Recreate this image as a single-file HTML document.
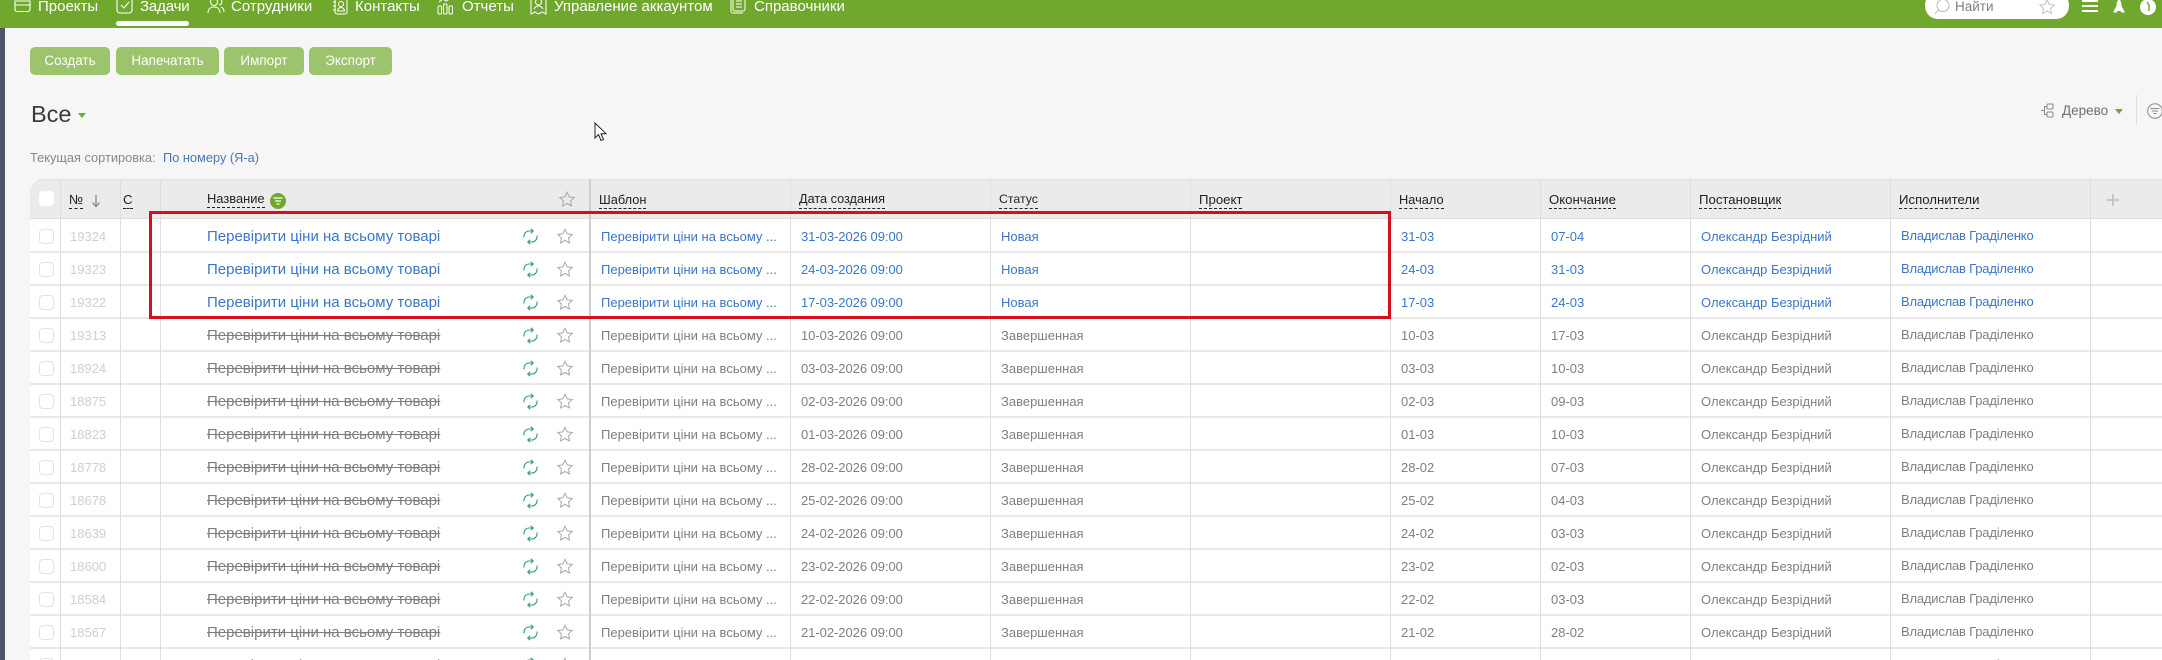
<!DOCTYPE html>
<html lang="ru"><head><meta charset="utf-8"><title>Задачи</title>
<style>
html,body{margin:0;padding:0;width:2162px;height:660px;overflow:hidden}
#page{width:2162px;height:660px;position:relative;overflow:hidden;background:#f6f6f6;font-family:"Liberation Sans","DejaVu Sans",sans-serif;font-size:14px;color:#333}
.abs{position:absolute;white-space:nowrap}
#top{position:absolute;left:0;top:0;width:2162px;height:28px;background:#70a82e}
#strip{position:absolute;left:0;top:28px;width:5px;height:632px;background:#50546b}
.nav{position:absolute;top:-2px;line-height:18px;font-size:15px;color:#fff;white-space:nowrap}
.btn{position:absolute;top:47px;height:28px;line-height:28px;background:#9bc46c;color:#fff;border-radius:5px;text-align:center;font-size:13.5px}
svg{position:absolute;overflow:visible}
#thead{position:absolute;left:30px;top:179px;width:2132px;height:40px;background:#ebebeb;border-top-left-radius:14px;box-shadow:inset 0 1px 0 #e3e3e3,inset 0 -1px 0 #dedede}
#tbody{position:absolute;left:30px;top:219px;width:2132px;height:441px;background:#fff}
.vl{position:absolute;top:179px;height:481px;width:1px;background:#dedede}
.r{position:absolute;left:0;width:2162px;height:33px;line-height:33px;font-size:13px;white-space:nowrap}
.r:after{content:"";position:absolute;left:30px;right:0;bottom:-1px;height:2px;background:#e9e9e9}
.r span{position:absolute;top:1px}
.r .cb{left:39px;top:10px;width:13px;height:13px;border:1.5px solid #e3e3e3;border-radius:4px;background:#fff}
.r .id{left:70px;color:#cfcfcf;font-size:13px}
.r .n{left:207px;top:1px;font-size:15px}
.r .t{left:601px}
.r .d{left:801px;letter-spacing:-.05px}
.r .s{left:1001px}
.r .b{left:1401px}
.r .e{left:1551px}
.r .p{left:1701px}
.r .i{left:1901px;top:0;letter-spacing:-.2px}
.new span{color:#3b76c6}
.done span{color:#7f7f7f}
.new .id,.done .id{color:#cfcfcf}
.done .n{text-decoration:line-through;color:#7a7f86}
.h{position:absolute;top:191px;line-height:17px;font-size:13.2px;color:#222;border-bottom:1.5px dashed #222;white-space:nowrap}
#red{position:absolute;left:149px;top:210.5px;width:1235.5px;height:102px;border:3px solid #d3101b;background:transparent}
</style></head><body><div id="page">
<div id="top"></div>
<div id="strip"></div>

<svg style="left:14px;top:-4px" width="17" height="18" viewBox="0 0 17 18" fill="none" stroke="#fff" stroke-width="1.1"><path d="M1 5h15v8.500a2 2 0 0 1-2 2H3a2 2 0 0 1-2-2zM1 9h15"/></svg>
<div class="nav" style="left:38px">Проекты</div>
<svg style="left:116px;top:-4px" width="17" height="18" viewBox="0 0 17 18" fill="none" stroke="#fff" stroke-width="1.1"><rect x="1" y="1" width="15" height="16" rx="3"/><path d="M5 9l3 3 5-6"/></svg>
<div class="nav" style="left:140px;letter-spacing:-.15px">Задачи</div>
<div style="position:absolute;left:116px;top:21px;width:73px;height:5px;border-radius:3px;background:#fff"></div>
<svg style="left:207px;top:-3px" width="18" height="18" viewBox="0 0 18 18" fill="none" stroke="#fff" stroke-width="1"><circle cx="7" cy="5" r="3.500"/><path d="M1 16c0-4 2.500-6 6-6s6 2 6 6M12 2a3 3 0 0 1 0 6M14 10c2 .8 3 3 3 5"/></svg>
<div class="nav" style="left:231px">Сотрудники</div>
<svg style="left:332px;top:-3px" width="17" height="18" viewBox="0 0 17 18" fill="none" stroke="#fff" stroke-width="1"><rect x="3" y="1" width="12" height="16" rx="2"/><circle cx="9" cy="7" r="2.500"/><path d="M5.500 14c0-2 1.500-3.500 3.500-3.500s3.500 1.500 3.500 3.500zM1 5h3M1 9h3M1 13h3"/></svg>
<div class="nav" style="left:355px">Контакты</div>
<svg style="left:437px;top:-3px" width="17" height="18" viewBox="0 0 17 18" fill="none" stroke="#fff" stroke-width="1"><rect x="1" y="9" width="3.500" height="8" rx="1"/><rect x="6.500" y="7" width="3.500" height="10" rx="1"/><rect x="12" y="9" width="3.500" height="8" rx="1"/><path d="M2 5l4-3 3 2 5-3"/></svg>
<div class="nav" style="left:462px">Отчеты</div>
<svg style="left:530px;top:-3px" width="17" height="18" viewBox="0 0 17 18" fill="none" stroke="#fff" stroke-width="1"><path d="M1 1v16l4-2 3.500 2 3.500-2 4 2V1"/><circle cx="8.500" cy="5" r="3"/><path d="M4 12c1-2 3-3 4.500-3s3.500 1 4.500 3"/></svg>
<div class="nav" style="left:554px">Управление аккаунтом</div>
<svg style="left:730px;top:-3px" width="16" height="18" viewBox="0 0 16 18" fill="none" stroke="#fff" stroke-width="1"><rect x="3" y="0" width="12" height="14" rx="2"/><path d="M1 3v11a2 2 0 0 0 2 2h10M6 4h6M6 7h6M6 10h6"/></svg>
<div class="nav" style="left:754px">Справочники</div>

<div style="position:absolute;left:1925px;top:-8px;width:144px;height:27px;background:#fff;border-radius:13px"></div>
<svg style="left:1934px;top:-1px" width="16" height="16" viewBox="0 0 16 16" fill="none" stroke="#bbb" stroke-width="1"><circle cx="9" cy="6.500" r="6"/><path d="M4.500 11L1 14.500"/></svg>
<div class="abs" style="left:1955px;top:-2px;line-height:18px;font-size:13.5px;color:#80808a">Найти</div>
<svg style="left:2039px;top:-1px" width="16" height="15" viewBox="0 0 16 15" fill="none" stroke="#c4c4c4" stroke-width="1"><path d="M8 .8l2.200 4.600 5 .6-3.700 3.400 1 5L8 12l-4.500 2.400 1-5L.8 6l5-.6z"/></svg>
<div style="position:absolute;left:2082px;top:0;width:16px;height:2px;background:#fff"></div>
<div style="position:absolute;left:2082px;top:4.500px;width:16px;height:2px;background:#fff"></div>
<div style="position:absolute;left:2082px;top:9.500px;width:16px;height:2px;background:#fff"></div>
<svg style="left:2113px;top:-1px" width="12" height="14" viewBox="0 0 12 14" fill="#fff"><path d="M6 0c2 2 2.500 4 2.500 7l3 5.500v1H8.500l-1-1.500h-3l-1 1.500H.500v-1l3-5.500C3.500 4 4 2 6 0z"/></svg>
<svg style="left:2140px;top:-1px" width="16" height="16" viewBox="0 0 16 16"><circle cx="8" cy="8" r="8" fill="#fff"/><path d="M7 3l2 3v6" stroke="#70a82e" stroke-width="1.500" fill="none"/></svg>

<div class="btn" style="left:30px;width:80px">Создать</div>
<div class="btn" style="left:116px;width:103px">Напечатать</div>
<div class="btn" style="left:224px;width:80px">Импорт</div>
<div class="btn" style="left:309px;width:83px">Экспорт</div>

<div class="abs" style="left:31px;top:99px;line-height:30px;font-size:23.5px;color:#3a3a3a">Все</div>
<svg style="left:78px;top:113px" width="8" height="5" viewBox="0 0 8 5"><path d="M0 0h8L4 5z" fill="#70a82e"/></svg>

<svg style="left:594px;top:122px" width="13" height="20" viewBox="0 0 13 20" fill="#fff" stroke="#222" stroke-width="1"><path d="M1 1v15l3.500-3.500 2.500 6 2.500-1-2.500-5.800H12z"/></svg>

<div class="abs" style="left:30px;top:150px;line-height:16px;font-size:12.8px;color:#888">Текущая сортировка:</div>
<div class="abs" style="left:163px;top:150px;line-height:16px;font-size:12.8px;color:#4a77b0">По номеру (Я-а)</div>

<svg style="left:2040px;top:103px" width="14" height="15" viewBox="0 0 14 15" fill="none" stroke="#8b8b8b" stroke-width="1"><rect x="7" y="1" width="6" height="5" rx="1"/><rect x="7" y="9" width="6" height="5" rx="1"/><path d="M7 3.500H4.500v8H7M4.500 7.500H1"/></svg>
<div class="abs" style="left:2062px;top:102px;line-height:18px;font-size:13.5px;color:#6f6f6f">Дерево</div>
<svg style="left:2115px;top:109px" width="8" height="5" viewBox="0 0 8 5"><path d="M0 0h8L4 5z" fill="#70a82e"/></svg>
<div style="position:absolute;left:2136px;top:95px;width:1px;height:30px;background:#dcdcdc"></div>
<svg style="left:2147px;top:103px" width="16" height="16" viewBox="0 0 16 16" fill="none" stroke="#8b8b8b" stroke-width="1"><circle cx="8" cy="8" r="7.300"/><path d="M3.500 5.500h9M5 8h6M6.500 10.500h3"/></svg>

<div id="thead"></div>
<div id="tbody"></div>

<div class="r new" style="top:219px"><span class="cb"></span><span class="id">19324</span><span class="n">Перевірити ціни на всьому товарі</span><span class="t">Перевірити ціни на всьому ...</span><span class="d">31-03-2026 09:00</span><span class="s">Новая</span><span class="b">31-03</span><span class="e">07-04</span><span class="p">Олександр Безрідний</span><span class="i">Владислав Граділенко</span></div>
<div class="r new" style="top:252px"><span class="cb"></span><span class="id">19323</span><span class="n">Перевірити ціни на всьому товарі</span><span class="t">Перевірити ціни на всьому ...</span><span class="d">24-03-2026 09:00</span><span class="s">Новая</span><span class="b">24-03</span><span class="e">31-03</span><span class="p">Олександр Безрідний</span><span class="i">Владислав Граділенко</span></div>
<div class="r new" style="top:285px"><span class="cb"></span><span class="id">19322</span><span class="n">Перевірити ціни на всьому товарі</span><span class="t">Перевірити ціни на всьому ...</span><span class="d">17-03-2026 09:00</span><span class="s">Новая</span><span class="b">17-03</span><span class="e">24-03</span><span class="p">Олександр Безрідний</span><span class="i">Владислав Граділенко</span></div>
<div class="r done" style="top:318px"><span class="cb"></span><span class="id">19313</span><span class="n">Перевірити ціни на всьому товарі</span><span class="t">Перевірити ціни на всьому ...</span><span class="d">10-03-2026 09:00</span><span class="s">Завершенная</span><span class="b">10-03</span><span class="e">17-03</span><span class="p">Олександр Безрідний</span><span class="i">Владислав Граділенко</span></div>
<div class="r done" style="top:351px"><span class="cb"></span><span class="id">18924</span><span class="n">Перевірити ціни на всьому товарі</span><span class="t">Перевірити ціни на всьому ...</span><span class="d">03-03-2026 09:00</span><span class="s">Завершенная</span><span class="b">03-03</span><span class="e">10-03</span><span class="p">Олександр Безрідний</span><span class="i">Владислав Граділенко</span></div>
<div class="r done" style="top:384px"><span class="cb"></span><span class="id">18875</span><span class="n">Перевірити ціни на всьому товарі</span><span class="t">Перевірити ціни на всьому ...</span><span class="d">02-03-2026 09:00</span><span class="s">Завершенная</span><span class="b">02-03</span><span class="e">09-03</span><span class="p">Олександр Безрідний</span><span class="i">Владислав Граділенко</span></div>
<div class="r done" style="top:417px"><span class="cb"></span><span class="id">18823</span><span class="n">Перевірити ціни на всьому товарі</span><span class="t">Перевірити ціни на всьому ...</span><span class="d">01-03-2026 09:00</span><span class="s">Завершенная</span><span class="b">01-03</span><span class="e">10-03</span><span class="p">Олександр Безрідний</span><span class="i">Владислав Граділенко</span></div>
<div class="r done" style="top:450px"><span class="cb"></span><span class="id">18778</span><span class="n">Перевірити ціни на всьому товарі</span><span class="t">Перевірити ціни на всьому ...</span><span class="d">28-02-2026 09:00</span><span class="s">Завершенная</span><span class="b">28-02</span><span class="e">07-03</span><span class="p">Олександр Безрідний</span><span class="i">Владислав Граділенко</span></div>
<div class="r done" style="top:483px"><span class="cb"></span><span class="id">18678</span><span class="n">Перевірити ціни на всьому товарі</span><span class="t">Перевірити ціни на всьому ...</span><span class="d">25-02-2026 09:00</span><span class="s">Завершенная</span><span class="b">25-02</span><span class="e">04-03</span><span class="p">Олександр Безрідний</span><span class="i">Владислав Граділенко</span></div>
<div class="r done" style="top:516px"><span class="cb"></span><span class="id">18639</span><span class="n">Перевірити ціни на всьому товарі</span><span class="t">Перевірити ціни на всьому ...</span><span class="d">24-02-2026 09:00</span><span class="s">Завершенная</span><span class="b">24-02</span><span class="e">03-03</span><span class="p">Олександр Безрідний</span><span class="i">Владислав Граділенко</span></div>
<div class="r done" style="top:549px"><span class="cb"></span><span class="id">18600</span><span class="n">Перевірити ціни на всьому товарі</span><span class="t">Перевірити ціни на всьому ...</span><span class="d">23-02-2026 09:00</span><span class="s">Завершенная</span><span class="b">23-02</span><span class="e">02-03</span><span class="p">Олександр Безрідний</span><span class="i">Владислав Граділенко</span></div>
<div class="r done" style="top:582px"><span class="cb"></span><span class="id">18584</span><span class="n">Перевірити ціни на всьому товарі</span><span class="t">Перевірити ціни на всьому ...</span><span class="d">22-02-2026 09:00</span><span class="s">Завершенная</span><span class="b">22-02</span><span class="e">03-03</span><span class="p">Олександр Безрідний</span><span class="i">Владислав Граділенко</span></div>
<div class="r done" style="top:615px"><span class="cb"></span><span class="id">18567</span><span class="n">Перевірити ціни на всьому товарі</span><span class="t">Перевірити ціни на всьому ...</span><span class="d">21-02-2026 09:00</span><span class="s">Завершенная</span><span class="b">21-02</span><span class="e">28-02</span><span class="p">Олександр Безрідний</span><span class="i">Владислав Граділенко</span></div>
<div class="r done" style="top:648px"><span class="cb"></span><span class="id">18520</span><span class="n">Перевірити ціни на всьому товарі</span><span class="t">Перевірити ціни на всьому ...</span><span class="d">20-02-2026 09:00</span><span class="s">Завершенная</span><span class="b">20-02</span><span class="e">27-02</span><span class="p">Олександр Безрідний</span><span class="i">Владислав Граділенко</span></div>

<div class="vl" style="left:60px"></div>
<div class="vl" style="left:120px"></div>
<div class="vl" style="left:160px"></div>
<div class="vl" style="left:589px;width:2px;background:#cdcdcd"></div>
<div class="vl" style="left:790px"></div>
<div class="vl" style="left:990px"></div>
<div class="vl" style="left:1190px"></div>
<div class="vl" style="left:1390px"></div>
<div class="vl" style="left:1540px"></div>
<div class="vl" style="left:1690px"></div>
<div class="vl" style="left:1890px"></div>
<div class="vl" style="left:2090px"></div>

<div style="position:absolute;left:39px;top:191px;width:15px;height:15px;border-radius:4px;background:#fff"></div>
<div class="h" style="left:69px">№</div>
<svg style="left:91px;top:194px" width="10" height="14" viewBox="0 0 10 14" fill="none" stroke="#888" stroke-width="1.300"><path d="M5 1v11M1.500 8.500L5 12.500l3.500-4"/></svg>
<div class="h" style="left:123px">С</div>
<div class="h" style="left:207px;top:190px;font-size:12.9px">Название</div>
<svg style="left:270px;top:193px" width="16" height="16" viewBox="0 0 16 16"><circle cx="8" cy="8" r="8" fill="#70a82e"/><path d="M3.500 5h9M5 8h6M6.500 11h3" stroke="#fff" stroke-width="1.300"/></svg>
<svg style="left:559px;top:191px" width="16" height="16" viewBox="0 0 16 15" fill="none" stroke="#a8a8a8" stroke-width="1"><path d="M8 .8l2.200 4.600 5 .6-3.700 3.400 1 5L8 12l-4.500 2.400 1-5L.8 6l5-.6z"/></svg>
<div class="h" style="left:599px;font-size:12.8px">Шаблон</div>
<div class="h" style="left:799px;font-size:12.7px">Дата создания</div>
<div class="h" style="left:999px;font-size:12.3px">Статус</div>
<div class="h" style="left:1199px">Проект</div>
<div class="h" style="left:1399px;font-size:12.8px">Начало</div>
<div class="h" style="left:1549px">Окончание</div>
<div class="h" style="left:1699px">Постановщик</div>
<div class="h" style="left:1899px">Исполнители</div>
<svg style="left:2106px;top:193px" width="14" height="14" viewBox="0 0 14 14"><path d="M7 1v12M1 7h12" stroke="#c4c4c4" stroke-width="1.800"/></svg>

<svg width="0" height="0" style="left:0;top:0"><defs>
<g id="rc" fill="none" stroke="#2f9e6b" stroke-width="1.100"><path d="M2 9.500C1.600 5.500 4 3 7.500 3H11M8.800.8L11.200 3 8.800 5.200M15 7.500C15.400 11.500 13 14 9.500 14H6M8.200 11.800L5.800 14l2.400 2.200"/></g>
<path id="st" d="M8 .8l2.200 4.600 5 .6-3.700 3.400 1 5L8 12l-4.500 2.400 1-5L.8 6l5-.6z" fill="none" stroke="#a8a8a8" stroke-width="1"/>
</defs></svg>
<svg style="left:522px;top:228px" width="17" height="17" viewBox="0 0 17 17"><use href="#rc"/></svg><svg style="left:557px;top:228px" width="16" height="16" viewBox="0 0 16 15"><use href="#st"/></svg>
<svg style="left:522px;top:261px" width="17" height="17" viewBox="0 0 17 17"><use href="#rc"/></svg><svg style="left:557px;top:261px" width="16" height="16" viewBox="0 0 16 15"><use href="#st"/></svg>
<svg style="left:522px;top:294px" width="17" height="17" viewBox="0 0 17 17"><use href="#rc"/></svg><svg style="left:557px;top:294px" width="16" height="16" viewBox="0 0 16 15"><use href="#st"/></svg>
<svg style="left:522px;top:327px" width="17" height="17" viewBox="0 0 17 17"><use href="#rc"/></svg><svg style="left:557px;top:327px" width="16" height="16" viewBox="0 0 16 15"><use href="#st"/></svg>
<svg style="left:522px;top:360px" width="17" height="17" viewBox="0 0 17 17"><use href="#rc"/></svg><svg style="left:557px;top:360px" width="16" height="16" viewBox="0 0 16 15"><use href="#st"/></svg>
<svg style="left:522px;top:393px" width="17" height="17" viewBox="0 0 17 17"><use href="#rc"/></svg><svg style="left:557px;top:393px" width="16" height="16" viewBox="0 0 16 15"><use href="#st"/></svg>
<svg style="left:522px;top:426px" width="17" height="17" viewBox="0 0 17 17"><use href="#rc"/></svg><svg style="left:557px;top:426px" width="16" height="16" viewBox="0 0 16 15"><use href="#st"/></svg>
<svg style="left:522px;top:459px" width="17" height="17" viewBox="0 0 17 17"><use href="#rc"/></svg><svg style="left:557px;top:459px" width="16" height="16" viewBox="0 0 16 15"><use href="#st"/></svg>
<svg style="left:522px;top:492px" width="17" height="17" viewBox="0 0 17 17"><use href="#rc"/></svg><svg style="left:557px;top:492px" width="16" height="16" viewBox="0 0 16 15"><use href="#st"/></svg>
<svg style="left:522px;top:525px" width="17" height="17" viewBox="0 0 17 17"><use href="#rc"/></svg><svg style="left:557px;top:525px" width="16" height="16" viewBox="0 0 16 15"><use href="#st"/></svg>
<svg style="left:522px;top:558px" width="17" height="17" viewBox="0 0 17 17"><use href="#rc"/></svg><svg style="left:557px;top:558px" width="16" height="16" viewBox="0 0 16 15"><use href="#st"/></svg>
<svg style="left:522px;top:591px" width="17" height="17" viewBox="0 0 17 17"><use href="#rc"/></svg><svg style="left:557px;top:591px" width="16" height="16" viewBox="0 0 16 15"><use href="#st"/></svg>
<svg style="left:522px;top:624px" width="17" height="17" viewBox="0 0 17 17"><use href="#rc"/></svg><svg style="left:557px;top:624px" width="16" height="16" viewBox="0 0 16 15"><use href="#st"/></svg>
<svg style="left:522px;top:657px" width="17" height="17" viewBox="0 0 17 17"><use href="#rc"/></svg><svg style="left:557px;top:657px" width="16" height="16" viewBox="0 0 16 15"><use href="#st"/></svg>

<div id="red"></div>
</div></body></html>
